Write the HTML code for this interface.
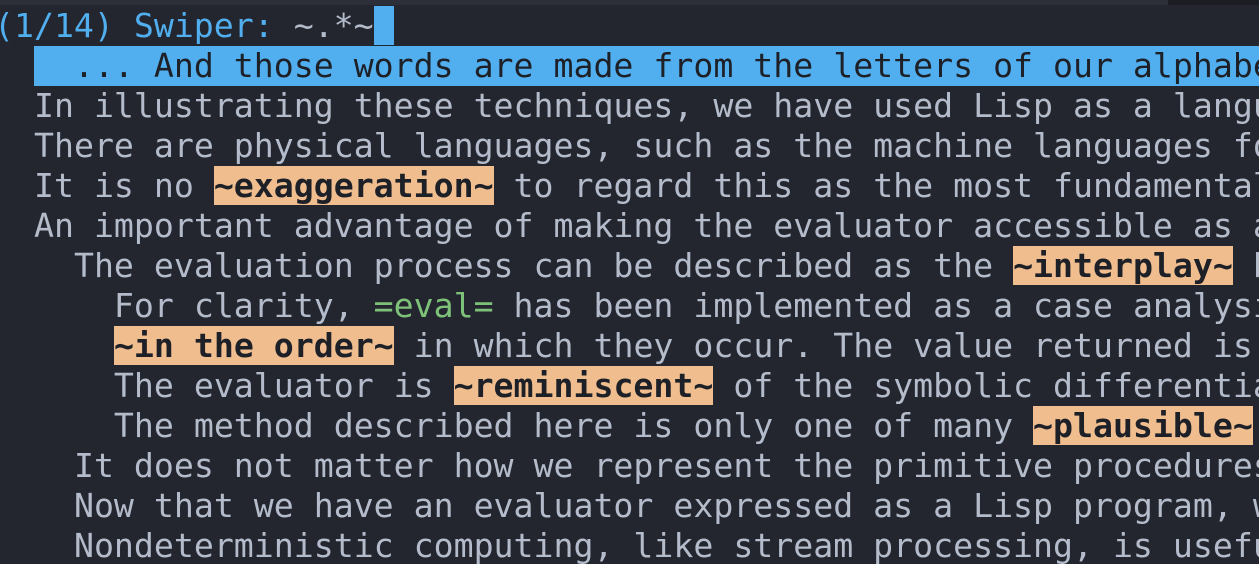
<!DOCTYPE html>
<html><head><meta charset="utf-8"><style>
html,body{margin:0;padding:0;width:1259px;height:564px;overflow:hidden;background:#23262e;position:relative;}
.top{position:absolute;left:0;top:0;width:1168px;height:5px;background:#2c2f37;}
.top2{position:absolute;left:1168px;top:0;width:91px;height:5px;background:#1b1d23;}
.l{position:absolute;left:34px;right:0;overflow:hidden;height:40px;line-height:40px;white-space:pre;font-family:"DejaVu Sans Mono","Liberation Mono",monospace;font-size:33.2px;color:#b4bccb;}
.h{background:#f0bd8f;color:#1e2027;font-weight:bold;}
.g{color:#7ec27a;}
</style></head><body>
<div class="top"></div><div class="top2"></div>
<div class="l" style="left:-6px;top:6px;color:#51afef">(1/14) Swiper: <span style="color:#b4bccb">~.*~</span><span style="background:#51afef"> </span></div>
<div class="l" style="top:46px;background:#51afef;color:#1e2027">  ... And those words are made from the letters of our alphabet</div>
<div class="l" style="top:86px">In illustrating these techniques, we have used Lisp as a language</div>
<div class="l" style="top:126px">There are physical languages, such as the machine languages for</div>
<div class="l" style="top:166px">It is no <span class="h">~exaggeration~</span> to regard this as the most fundamental</div>
<div class="l" style="top:206px">An important advantage of making the evaluator accessible as a</div>
<div class="l" style="top:246px">  The evaluation process can be described as the <span class="h">~interplay~</span> be</div>
<div class="l" style="top:286px">    For clarity, <span class="g">=eval=</span> has been implemented as a case analysis</div>
<div class="l" style="top:326px">    <span class="h">~in the order~</span> in which they occur. The value returned is</div>
<div class="l" style="top:366px">    The evaluator is <span class="h">~reminiscent~</span> of the symbolic differentiation</div>
<div class="l" style="top:406px">    The method described here is only one of many <span class="h">~plausible~</span> </div>
<div class="l" style="top:446px">  It does not matter how we represent the primitive procedures</div>
<div class="l" style="top:486px">  Now that we have an evaluator expressed as a Lisp program, we</div>
<div class="l" style="top:526px">  Nondeterministic computing, like stream processing, is useful</div>
</body></html>
